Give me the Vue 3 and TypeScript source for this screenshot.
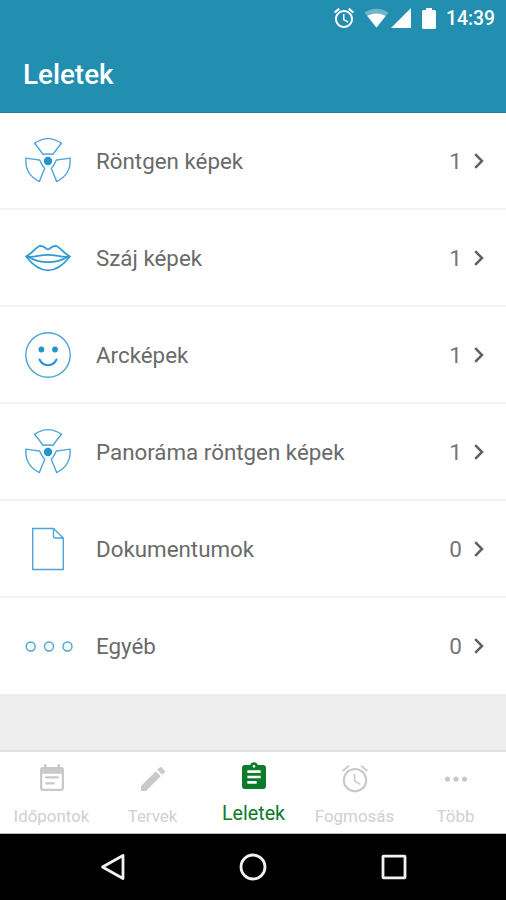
<script setup lang="ts">
type IconName = 'xray' | 'lips' | 'face' | 'document' | 'dots'
type TabIcon = 'calendar' | 'pencil' | 'clipboard' | 'alarm' | 'more'

interface Category {
  label: string
  count: number
  icon: IconName
}

interface Tab {
  label: string
  icon: TabIcon
  active?: boolean
}

const categories: Category[] = [
  { label: 'Röntgen képek', count: 1, icon: 'xray' },
  { label: 'Száj képek', count: 1, icon: 'lips' },
  { label: 'Arcképek', count: 1, icon: 'face' },
  { label: 'Panoráma röntgen képek', count: 1, icon: 'xray' },
  { label: 'Dokumentumok', count: 0, icon: 'document' },
  { label: 'Egyéb', count: 0, icon: 'dots' },
]

const tabs: Tab[] = [
  { label: 'Időpontok', icon: 'calendar' },
  { label: 'Tervek', icon: 'pencil' },
  { label: 'Leletek', icon: 'clipboard', active: true },
  { label: 'Fogmosás', icon: 'alarm' },
  { label: 'Több', icon: 'more' },
]

const alarmPath =
  'M22 5.72l-4.6-3.86-1.29 1.53 4.6 3.86L22 5.72zM7.88 3.39L6.6 1.86 2 5.71l1.29 1.53 4.59-3.85zM12.5 8H11v6l4.75 2.85.75-1.23-4-2.37V8zM12 4c-4.97 0-9 4.03-9 9s4.02 9 9 9c4.97 0 9-4.03 9-9s-4.03-9-9-9zm0 16c-3.87 0-7-3.13-7-7s3.13-7 7-7 7 3.13 7 7-3.13 7-7 7z'

const thinAlarmPath =
  'M21.700 5.400l-4.700-3.900-.9 1.100 4.700 3.900.9-1.100zM7.900 2.600L7 1.500 2.300 5.400l.9 1.100 4.700-3.900zM12.300 8H11.100v5.700l4.600 2.800.6-1-4-2.400V8zM12 3.700a9.200 9.200 0 1 0 0 18.400 9.200 9.200 0 0 0 0-18.400zm0 16.800a7.600 7.600 0 1 1 0-15.200 7.600 7.600 0 0 1 0 15.200z'

const tabPaths: Record<TabIcon, string> = {
  calendar:
    'M17 10H7v1.6h10V10zM19 3h-1V1h-1.8v2H7.8V1H6v2H5c-1.1 0-2 .9-2 2v14c0 1.1.9 2 2 2h14c1.1 0 2-.9 2-2V5c0-1.1-.9-2-2-2zm.3 16.3H4.700V8h14.600v11.300zM14 14.500H7v1.600h7v-1.600z',
  pencil:
    'M3 17.250V21h3.750L17.810 9.940l-3.750-3.750L3 17.250zM20.710 7.040c.390-.390.390-1.020 0-1.410l-2.340-2.340c-.390-.390-1.020-.390-1.410 0l-1.830 1.830 3.750 3.750 1.830-1.830z',
  clipboard:
    'M19 3h-4.180C14.400 1.840 13.300 1 12 1c-1.300 0-2.400.840-2.820 2H5c-1.100 0-2 .900-2 2v14c0 1.100.900 2 2 2h14c1.100 0 2-.900 2-2V5c0-1.100-.900-2-2-2zm-7 0c.550 0 1 .450 1 1s-.450 1-1 1-1-.450-1-1 .450-1 1-1zm2 14H7v-2h7v2zm3-4H7v-2h10v2zm0-4H7V7h10v2z',
  alarm: thinAlarmPath,
  more: 'M5.600 10.200a1.900 1.900 0 1 0 0 3.800 1.900 1.900 0 0 0 0-3.800zm6.400 0a1.900 1.900 0 1 0 0 3.800 1.900 1.900 0 0 0 0-3.800zm6.400 0a1.900 1.900 0 1 0 0 3.800 1.900 1.900 0 0 0 0-3.800z',
}

const bladeAngles = [0, 120, 240]
</script>

<template>
  <div class="screen">
    <header class="header">
      <div class="status">
        <svg class="status-alarm" viewBox="0 0 24 24"><path :d="alarmPath" /></svg>
        <svg class="status-wifi" viewBox="0 0 26 20">
          <path class="faint" d="M0.500 4.500C8 -1 18 -1 25.500 4.500L13 20z" />
          <path d="M3.500 8C9 4.500 17 4.500 22.500 8L13 20z" />
        </svg>
        <svg class="status-signal" viewBox="0 0 20 20"><path d="M0 20L20 0V20z" /></svg>
        <svg class="status-battery" viewBox="0 0 14 21">
          <path d="M4 0H10V2H12.500Q14 2 14 3.500V19.500Q14 21 12.500 21H1.500Q0 21 0 19.500V3.500Q0 2 1.500 2H4z" />
        </svg>
        <span class="clock">14:39</span>
      </div>
      <h1 class="title">Leletek</h1>
    </header>

    <main class="content">
      <ul class="list">
        <li v-for="item in categories" :key="item.label" class="row">
          <svg class="row-icon" viewBox="-24 -24 48 48">
            <template v-if="item.icon === 'xray'">
              <path
                v-for="angle in bladeAngles"
                :key="angle"
                d="M-13.500 -17.700Q0 -27 13.500 -17.700Q9 -12.500 5 -6.700Q0 -7.300 -5 -6.700Q-9 -12.500 -13.500 -17.700z"
                :transform="`rotate(${angle})`"
              />
              <circle class="solid" r="4.200" />
            </template>
            <g v-else-if="item.icon === 'lips'" class="lips">
              <path d="M-22 -1.500C-15 -5 -11.500 -12 -7.500 -12.200C-4.500 -12.200 -2.500 -9.700 0 -8.500C2.500 -9.700 4.500 -12.200 7.500 -12.200C11.500 -12 15 -5 22 -1.500C15 7.500 8 12.300 0 12.300S-15 7.500 -22 -1.500z" />
              <path d="M-22 -1.500C-14 0 -9 -3.200 0 -3.200S14 0 22 -1.500" />
              <path d="M-20 -1.200C-8 6 8 6 20 -1.200" />
            </g>
            <template v-else-if="item.icon === 'face'">
              <circle r="22.200" />
              <circle class="solid" cx="-6.600" cy="-5.500" r="2.900" />
              <circle class="solid" cx="7" cy="-5.500" r="2.900" />
              <path class="smile" d="M-8.500 4.500C-5 12 5 12 8.500 4.500" />
            </template>
            <template v-else-if="item.icon === 'document'">
              <path d="M-15.300 -20.500H5.500L15.300 -11V20.500H-15.300zM5.500 -20.500V-13Q5.500 -11 7.500 -11H15.300" />
            </template>
            <template v-else>
              <circle cx="-17.300" cy="0.500" r="4.500" />
              <circle cx="1" cy="0.500" r="4.500" />
              <circle cx="19.500" cy="0.500" r="4.500" />
            </template>
          </svg>
          <span class="row-label">{{ item.label }}</span>
          <span class="row-count">{{ item.count }}</span>
          <svg class="chevron" viewBox="0 0 10 16"><path d="M1.200 1.200L8 8L1.200 14.800" /></svg>
        </li>
      </ul>
    </main>

    <nav class="tabs">
      <div v-for="tab in tabs" :key="tab.label" class="tab" :class="{ active: tab.active }">
        <svg class="tab-icon" viewBox="0 0 24 24"><path :d="tabPaths[tab.icon]" /></svg>
        <span class="tab-label">{{ tab.label }}</span>
      </div>
    </nav>

    <footer class="system">
      <svg viewBox="-16 -16 32 32"><path d="M-10.500 0L10 -11.500V11.500z" /></svg>
      <svg viewBox="-16 -16 32 32"><circle r="12" /></svg>
      <svg viewBox="-16 -16 32 32"><rect x="-11" y="-10.800" width="22" height="21.600" rx=".500" /></svg>
    </footer>
  </div>
</template>

<style>
body {
  margin: 0;
}
</style>

<style scoped>
.screen {
  display: flex;
  flex-direction: column;
  width: 506px;
  height: 900px;
  overflow: hidden;
  background: #ededed;
  font-family: Roboto, 'Liberation Sans', sans-serif;
}
.header {
  flex: none;
  box-sizing: border-box;
  height: 113px;
  background: #228fb1;
  border-bottom: 1px solid #237f9d;
  color: #fff;
}
.status {
  display: flex;
  align-items: center;
  justify-content: flex-end;
  height: 36px;
  padding-right: 11px;
}
.status svg {
  fill: #fff;
}
.status-alarm {
  width: 24px;
  height: 24px;
  margin-right: 8px;
}
.status-wifi {
  width: 25px;
  height: 20px;
  margin-right: 2px;
}
.status-signal {
  width: 20px;
  height: 20px;
  margin-right: 11px;
}
.status-battery {
  width: 14px;
  height: 21px;
  margin-right: 10px;
}
.faint {
  opacity: 0.35;
}
.clock {
  font-size: 19.300px;
  font-weight: 500;
}
.title {
  margin: 0;
  padding-left: 23px;
  font-size: 27.800px;
  font-weight: 500;
  line-height: 78px;
}
.content {
  flex: 1;
}
.list {
  margin: 0;
  padding: 0;
  list-style: none;
}
.row {
  display: flex;
  align-items: center;
  box-sizing: border-box;
  height: 97px;
  padding: 0 22px 0 24px;
  background: #fff;
  border-bottom: 2px solid #f3f3f3;
}
.row:last-child {
  height: 96px;
  border-bottom: 0;
}
.row-icon {
  width: 48px;
  height: 48px;
  overflow: visible;
  fill: none;
  stroke: #4ba5d6;
  stroke-width: 1.400;
  stroke-linejoin: round;
}
.row-icon .solid {
  fill: #2196cb;
  stroke: none;
}
.row-icon .smile {
  stroke: #2196cb;
  stroke-width: 2;
  stroke-linecap: round;
}
.lips {
  stroke: #2f9bd0;
  stroke-width: 1.700;
}
.row-label {
  flex: 1;
  padding-left: 24px;
  color: #6a6a6a;
  font-size: 22.350px;
}
.row-count {
  color: #757575;
  font-size: 22.500px;
}
.chevron {
  width: 10px;
  height: 16px;
  margin-left: 12px;
  fill: none;
  stroke: #606060;
  stroke-width: 2.500;
}
.tabs {
  display: flex;
  flex: none;
  box-sizing: border-box;
  height: 84px;
  padding-left: 1px;
  background: #fff;
  border-top: 2px solid #e0e0e0;
  border-bottom: 1px solid #bbb;
}
.tab {
  display: flex;
  flex: 1 1 0;
  flex-direction: column;
  align-items: center;
  padding-top: 11px;
  color: #c9c9c9;
}
.tab-icon {
  width: 32px;
  height: 32px;
  fill: currentColor;
}
.tab-label {
  margin-top: 11px;
  color: #d0d0d0;
  font-size: 16.900px;
  line-height: 20px;
}
.tab.active {
  padding-top: 9px;
  color: #0d7a2c;
}
.active .tab-label {
  color: inherit;
  font-size: 19.700px;
}
.system {
  display: flex;
  flex: none;
  align-items: center;
  justify-content: center;
  gap: 108.500px;
  height: 66px;
  background: #000;
}
.system svg {
  width: 32px;
  height: 32px;
  fill: none;
  stroke: #f2f2f2;
  stroke-width: 2.800;
  stroke-linejoin: round;
}
</style>
